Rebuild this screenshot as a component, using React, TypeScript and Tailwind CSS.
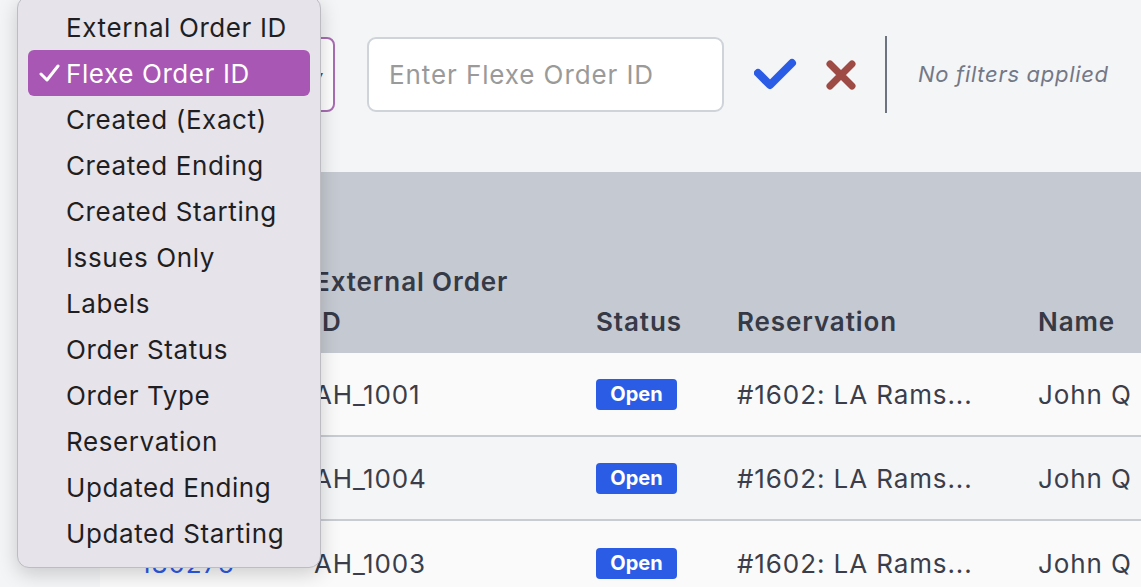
import React from 'react';

const options = [
  'External Order ID',
  'Flexe Order ID',
  'Created (Exact)',
  'Created Ending',
  'Created Starting',
  'Issues Only',
  'Labels',
  'Order Status',
  'Order Type',
  'Reservation',
  'Updated Ending',
  'Updated Starting',
];

const rows = [
  { id: '180271', ext: 'AH_1001', bg: 'bg-[#fafafa]' },
  { id: '180274', ext: 'AH_1004', bg: 'bg-[#f4f5f7]' },
  { id: '180276', ext: 'AH_1003', bg: 'bg-[#fafafa]' },
];

export default function App() {
  return (
    <div className="relative w-full h-[587px] overflow-hidden bg-[#f4f5f7] font-['Inter',sans-serif]">
      {/* Filter bar */}
      <div className="flex items-center pt-[36px] pl-[100px]">
        <div className="w-[235px] h-[75px] rounded-[8px] border-2 border-[#a86cb3] bg-white flex items-center justify-end pr-[10px]">
          <span className="text-[10px] text-gray-600">▾</span>
        </div>
        <input
          className="ml-[32px] w-[357px] h-[75px] rounded-[9px] border-2 border-[#cfd3da] bg-white px-[20px] text-[26px] tracking-[0.9px] text-gray-700 placeholder:text-[#9a9a9a] outline-none"
          placeholder="Enter Flexe Order ID"
        />
        <button className="ml-[30px] w-[44px] h-[40px] flex items-center justify-center">
          <svg width="44" height="34" viewBox="0 0 44 34">
            <polyline points="4,15 16,27 38,5" fill="none" stroke="#2b5ce6" strokeWidth="8" strokeLinecap="round" strokeLinejoin="round" />
          </svg>
        </button>
        <button className="ml-[26px] w-[34px] h-[34px] flex items-center justify-center">
          <svg width="34" height="34" viewBox="0 0 34 34">
            <path d="M6 6 L28 28 M28 6 L6 28" fill="none" stroke="#9e4a45" strokeWidth="7" strokeLinecap="round" />
          </svg>
        </button>
        <div className="ml-[27px] w-[2px] h-[77px] bg-[#6e7380]" />
        <span className="ml-[31px] text-[22px] tracking-[0.7px] italic text-[#737886]">No filters applied</span>
      </div>

      {/* Orders table */}
      <div className="mt-[59px] ml-[100px]">
        <div className="h-[181px] bg-[#c5c9d1] pl-[40px] flex items-end pb-[11px] text-[26px] tracking-[0.9px] font-semibold text-[#363946] leading-[40px]">
          <div className="w-[174px]">Flexe Order ID</div>
          <div className="w-[282px] pr-[70px]">External Order ID</div>
          <div className="w-[141px]">Status</div>
          <div className="w-[301px]">Reservation</div>
          <div>Name</div>
        </div>
        {rows.map((r, i) => (
          <div
            key={r.id}
            className={`h-[84px] ${r.bg} pl-[40px] flex items-center text-[26px] tracking-[0.9px] text-[#3b3e4a] ${i < rows.length - 1 ? 'border-b-2 border-[#c8ccd3]' : ''}`}
          >
            <div className="w-[174px] text-[#2b5ce6]">{r.id}</div>
            <div className="w-[282px]">{r.ext}</div>
            <div className="w-[141px] flex items-center">
              <span className="inline-flex items-center justify-center w-[81px] h-[31px] rounded-[4px] bg-[#2b5ce6] text-white text-[20px] tracking-normal font-bold">
                Open
              </span>
            </div>
            <div className="w-[301px]">#1602: LA Rams...</div>
            <div>John Q</div>
          </div>
        ))}
      </div>

      {/* Native select popup */}
      <div className="absolute left-[17px] top-[-4px] w-[304px] rounded-[12px] border border-[#bdbcc2] bg-[#e6e3eb] pt-[7px] pb-[11px] px-[10px] shadow-[0_6px_20px_rgba(0,0,0,0.18)]">
        {options.map((o) => {
          const selected = o === 'Flexe Order ID';
          return (
            <div
              key={o}
              className={`h-[46px] flex items-center rounded-[6px] text-[26px] tracking-[0.6px] ${selected ? 'bg-[#a957b4] text-white' : 'text-[#1f1f23]'}`}
            >
              <span className="w-[38px] pl-[11px] flex items-center">
                {selected && (
                  <svg width="21" height="18" viewBox="0 0 21 18">
                    <polyline points="2,10 8,16 19,2" fill="none" stroke="white" strokeWidth="3" strokeLinecap="round" strokeLinejoin="round" />
                  </svg>
                )}
              </span>
              <span>{o}</span>
            </div>
          );
        })}
      </div>
    </div>
  );
}
